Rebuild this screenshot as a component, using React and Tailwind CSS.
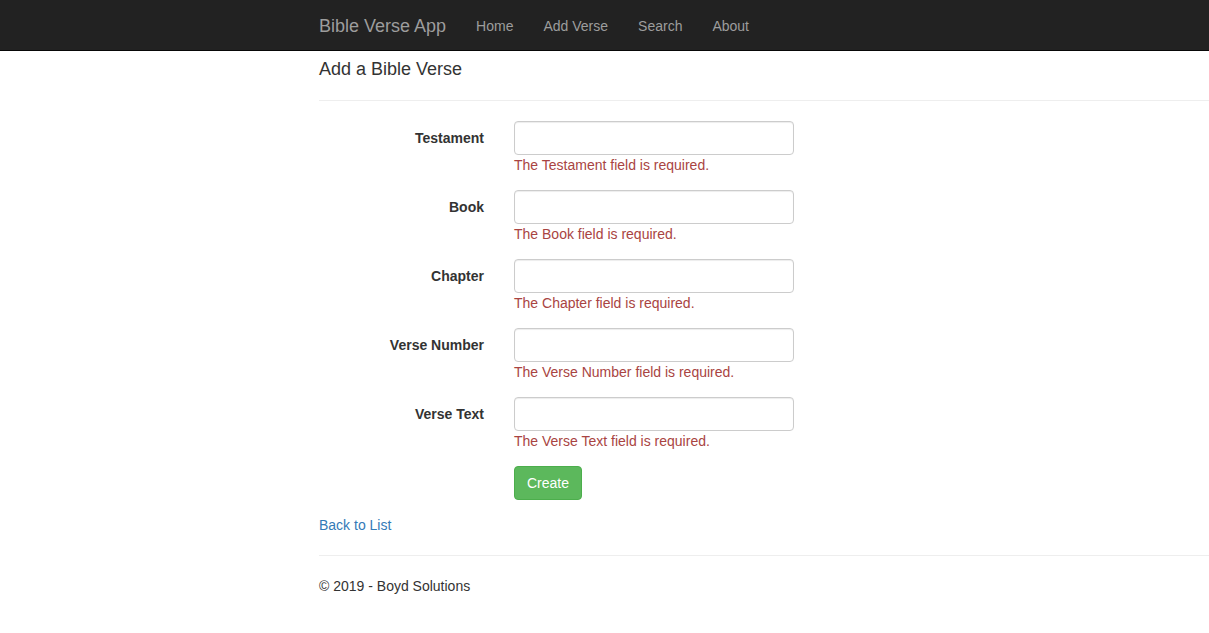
import React from 'react';

const fields = ['Testament', 'Book', 'Chapter', 'Verse Number', 'Verse Text'];

function FieldRow({ label }) {
  return (
    <div className="flex mb-[15px]">
      <label className="w-[165px] shrink-0 text-right font-bold pt-[7px] leading-[20px]">{label}</label>
      <div className="ml-[30px] flex flex-col">
        <input
          type="text"
          className="w-[280px] h-[34px] px-3 py-[6px] border border-[#ccc] rounded-[4px] bg-white shadow-[inset_0_1px_1px_rgba(0,0,0,0.075)] outline-none"
        />
        <span className="text-[#a94442] leading-[20px]">The {label} field is required.</span>
      </div>
    </div>
  );
}

export default function App() {
  return (
    <div
      className="min-h-screen bg-white text-[14px] leading-[20px] text-[#333] overflow-hidden"
      style={{ fontFamily: '"Liberation Sans", Arial, Helvetica, sans-serif' }}
    >
      <nav className="h-[51px] bg-[#222] border-b border-[#080808]">
        <div className="flex pl-[304px]">
          <a className="px-[15px] pt-[16px] pb-[14px] h-[50px] text-[18px] leading-[20px] text-[#9d9d9d]">Bible Verse App</a>
          <ul className="flex">
            {['Home', 'Add Verse', 'Search', 'About'].map((item) => (
              <li key={item}>
                <a className="block px-[15px] pt-[16px] pb-[14px] leading-[20px] text-[#9d9d9d]">{item}</a>
              </li>
            ))}
          </ul>
        </div>
      </nav>

      <div className="pl-[319px]">
        <h4 className="mt-[9px] mb-[10px] text-[18px] leading-[19.8px] font-medium text-[#333]">Add a Bible Verse</h4>
        <hr className="mt-[20px] mb-[20px] border-0 border-t border-[#eee]" />

        <form>
          {fields.map((f) => (
            <FieldRow key={f} label={f} />
          ))}
          <div className="flex mb-[15px]">
            <div className="w-[165px] shrink-0" />
            <div className="ml-[30px]">
              <button
                type="button"
                className="h-[34px] px-3 py-[6px] bg-[#5cb85c] border border-[#4cae4c] rounded-[4px] text-white leading-[20px]"
              >
                Create
              </button>
            </div>
          </div>
        </form>

        <div>
          <a className="text-[#337ab7]">Back to List</a>
        </div>

        <hr className="mt-[20px] mb-[20px] border-0 border-t border-[#eee]" />
        <footer>
          <p>© 2019 - Boyd Solutions</p>
        </footer>
      </div>
    </div>
  );
}
